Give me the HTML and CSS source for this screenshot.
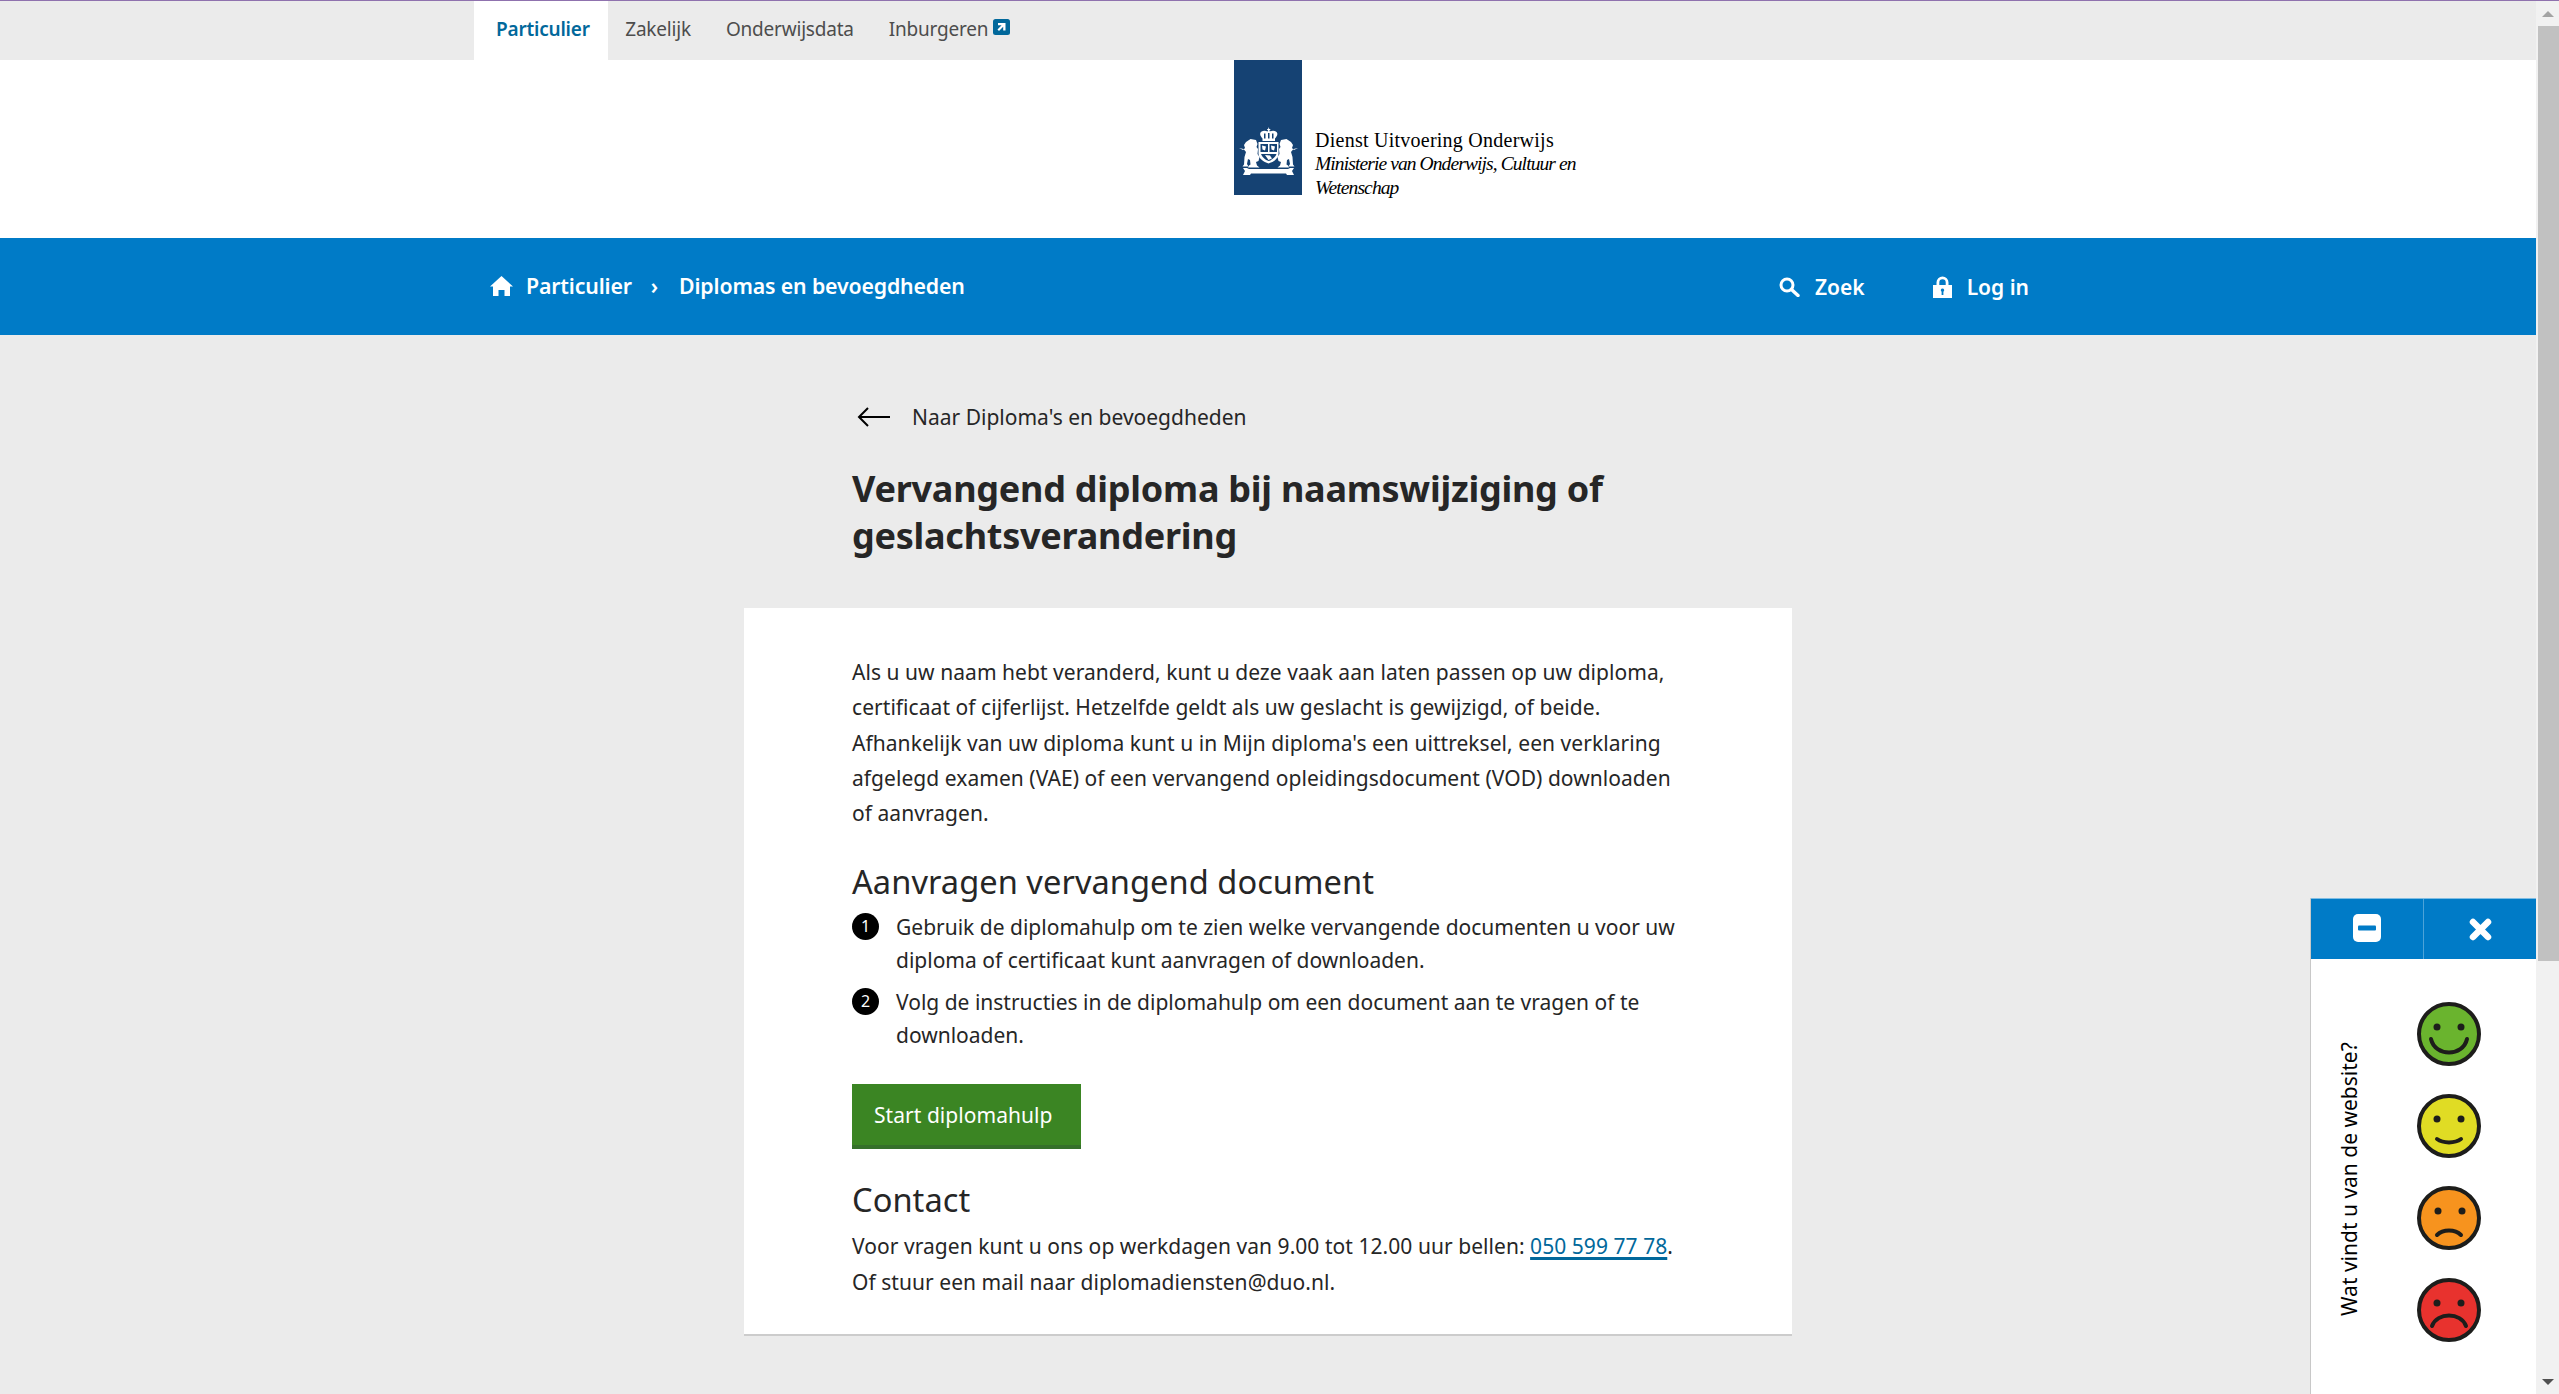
FILE: index.html
```html
<!DOCTYPE html>
<html lang="nl">
<head>
  <meta charset="UTF-8">
  <title>Vervangend diploma bij naamswijziging of geslachtsverandering</title>
  <link rel="stylesheet" href="styles.css">
</head>
<body>
  <div class="page">
    <nav class="topbar">
      <div class="wrap topbar-inner">
        <a class="tab active">Particulier</a>
        <a class="tab">Zakelijk</a>
        <a class="tab">Onderwijsdata</a>
        <a class="tab">Inburgeren
          <svg class="ext-icon" viewBox="0 0 17 16"><rect width="17" height="16" rx="2.5" fill="#01689b"/><path d="M5 4h7.500v7.500h-2.300V7.800L6 12 4.500 10.500 8.600 6.300H5z" fill="#fff"/></svg>
        </a>
      </div>
    </nav>

    <header class="masthead">
      <div class="wrap">
        <div class="logo">
          <div class="logo-band">
            <!-- wapen -->
            <svg class="crest" viewBox="0 0 59 49" fill="#fff">
              <path d="M29.500 0l.8 2h1v1l-1 .3.500 1.200c3.500-1.500 7-.5 7.500 2 .3 1.700-1 3.500-2.300 5v2.500H23.500V11.500c-1.300-1.500-2.600-3.300-2.300-5 .5-2.500 4-3.500 7.500-2l.5-1.200-1-.3V2h1z"/>
              <path d="M25 6.500v5h1.500v-5zM29 6v5.500h1.500V6zM33 6.500v5h1.500v-5z" fill="#154273"/>
              <path d="M19.500 15h20v11.500c0 5-5 8.500-10 10-5-1.500-10-5-10-10z"/>
              <path d="M21.500 17h7.500v8h-7.500zM30.500 17h7.500v8h-7.500zM22 27h15.500c-1 3-4.500 6-7.800 7-3.200-1-6.700-4-7.700-7z" fill="#154273"/>
              <path d="M23 18.500l4 1-1 4-2.500-1zM32 18.500l4 1-1 4-2.500-1zM26 28l5 .5 2 3-3.500 1.500z"/>
              <g id="leeuw">
                <path d="M0 21l4 2 2-2-1-3 2-3 4.500-3 5.500 1 1.500 4-1 3 1.500 2-.5 5 2 3-1 4-2.500 1 1 3.500 2.500 2H9l1-2 1.500-1-.5-4.500-2-1-1 5 1.500 2.500H3.500l1.500-2 .5-7.500 1.500-5-2.500-3z"/>
              </g>
              <use href="#leeuw" transform="matrix(-1 0 0 1 59 0)"/>
              <path d="M4 41h4l2 1h39l2-1h4l-2 3 2 4h-7l-1-1.500H12L11 48H4l2-4z"/>
            </svg>
          </div>
          <div class="logo-text">
            <span class="logo-line">Dienst Uitvoering Onderwijs</span>
            <em class="logo-line sub">Ministerie van Onderwijs, Cultuur en Wetenschap</em>
          </div>
        </div>
      </div>
    </header>

    <div class="bluebar">
      <div class="wrap bluebar-inner">
        <div class="crumbs">
          <svg class="home-icon" viewBox="0 0 23 20"><path d="M11.500 0L23 10.500h-3V20h-5.500v-6h-6v6H3v-9.500H0z" fill="#fff"/></svg>
          <a>Particulier</a>
          <span class="crumb-sep">›</span>
          <a>Diplomas en bevoegdheden</a>
        </div>
        <div class="tools">
          <a class="tool">
            <svg class="search-icon" viewBox="0 0 21 20"><circle cx="8" cy="8" r="6" fill="none" stroke="#fff" stroke-width="3"/><path d="M12.500 12.500l6.500 6" stroke="#fff" stroke-width="3.400" stroke-linecap="round"/></svg>
            Zoek
          </a>
          <a class="tool">
            <svg class="lock-icon" viewBox="0 0 19 22"><path d="M3.500 9V6.500a6 6 0 0 1 12 0V9h-2.800V6.500a3.200 3.200 0 0 0-6.400 0V9z" fill="#fff"/><path fill-rule="evenodd" d="M0 9h19v13H0zM9.500 12.500a1.800 1.800 0 0 0-.9 3.300V19h1.800v-3.200a1.800 1.800 0 0 0-.9-3.300z" fill="#fff"/></svg>
            Log in
          </a>
        </div>
      </div>
    </div>

    <main class="content">
      <a class="backlink">
        <svg class="back-arrow" viewBox="0 0 33 20"><path d="M33 10H2M11 1l-9 9 9 9" fill="none" stroke="#000" stroke-width="2"/></svg>
        Naar Diploma's en bevoegdheden
      </a>
      <h1>Vervangend diploma bij naamswijziging of geslachtsverandering</h1>

      <section class="card">
        <p class="intro">Als u uw naam hebt veranderd, kunt u deze vaak aan laten passen op uw diploma, certificaat of cijferlijst. Hetzelfde geldt als uw geslacht is gewijzigd, of beide. Afhankelijk van uw diploma kunt u in Mijn diploma's een uittreksel, een verklaring afgelegd examen (VAE) of een vervangend opleidingsdocument (VOD) downloaden of aanvragen.</p>

        <h2 class="sub-first">Aanvragen vervangend document</h2>
        <ol class="steps">
          <li class="step"><span class="step-nr">1</span><span>Gebruik de diplomahulp om te zien welke vervangende documenten u voor uw diploma of certificaat kunt aanvragen of downloaden.</span></li>
          <li class="step"><span class="step-nr">2</span><span>Volg de instructies in de diplomahulp om een document aan te vragen of te downloaden.</span></li>
        </ol>
        <a class="btn">Start diplomahulp</a>

        <h2 class="sub-contact">Contact</h2>
        <p class="contact-text">Voor vragen kunt u ons op werkdagen van 9.00 tot 12.00 uur bellen: <a class="phone">050 599 77 78</a>.<br>Of stuur een mail naar diplomadiensten@duo.nl.</p>
      </section>
    </main>

    <aside class="feedback">
      <div class="feedback-head">
        <button class="fb-btn">
          <svg class="fb-min" viewBox="0 0 28 28"><rect width="28" height="28" rx="5" fill="#fff"/><rect x="5" y="11.500" width="18" height="5" rx="1" fill="#007bc7"/></svg>
        </button>
        <button class="fb-btn">
          <svg class="fb-close" viewBox="0 0 23 23"><path d="M4 4l15 15M19 4L4 19" stroke="#fff" stroke-width="6.500" stroke-linecap="round"/></svg>
        </button>
      </div>
      <div class="feedback-body">
        <div class="fb-label">Wat vindt u van de website?</div>
        <div class="faces">
          <svg class="face" viewBox="0 0 64 64"><circle cx="32" cy="32" r="30" fill="#6ab42e" stroke="#1d1d1b" stroke-width="4"/><circle cx="20" cy="25" r="3.500" fill="#1d1d1b"/><circle cx="44" cy="25" r="3.500" fill="#1d1d1b"/><path d="M14 37c4 18 32 18 36 0" fill="none" stroke="#1d1d1b" stroke-width="4" stroke-linecap="round"/></svg>
          <svg class="face" viewBox="0 0 64 64"><circle cx="32" cy="32" r="30" fill="#e0dc24" stroke="#1d1d1b" stroke-width="4"/><circle cx="20" cy="25" r="3.500" fill="#1d1d1b"/><circle cx="44" cy="25" r="3.500" fill="#1d1d1b"/><path d="M20 45c6 4.500 18 4.500 24 0" fill="none" stroke="#1d1d1b" stroke-width="4" stroke-linecap="round"/></svg>
          <svg class="face" viewBox="0 0 64 64"><circle cx="32" cy="32" r="30" fill="#f7931e" stroke="#1d1d1b" stroke-width="4"/><circle cx="21" cy="25" r="3.500" fill="#1d1d1b"/><circle cx="45" cy="25" r="3.500" fill="#1d1d1b"/><path d="M20 49c6-6 18-6 24 0" fill="none" stroke="#1d1d1b" stroke-width="4" stroke-linecap="round"/></svg>
          <svg class="face" viewBox="0 0 64 64"><circle cx="32" cy="32" r="30" fill="#e8322e" stroke="#1d1d1b" stroke-width="4"/><circle cx="20" cy="25" r="3.500" fill="#1d1d1b"/><circle cx="44" cy="25" r="3.500" fill="#1d1d1b"/><path d="M15 48c5-14 29-14 34 0" fill="none" stroke="#1d1d1b" stroke-width="4" stroke-linecap="round"/></svg>
        </div>
      </div>
    </aside>
  </div>

  <div class="scrollbar">
    <div class="scroll-up"></div>
    <div class="scroll-thumb"></div>
    <div class="scroll-track"></div>
    <div class="scroll-down"></div>
  </div>
</body>
</html>
```

FILE: styles.css
```css
:root {
  --blue: #007bc7;
  --link: #01689b;
  --grey: #ebebeb;
  --text: #262626;
}

html, body {
  height: 100%;
}

body {
  margin: 0;
  display: flex;
  height: 100vh;
  overflow: hidden;
  box-sizing: border-box;
  border-top: 1px solid #8f72ae;
  background: var(--grey);
  color: var(--text);
  font-family: "Noto Sans", "Open Sans", sans-serif;
  font-size: 21px;
}

.page {
  flex: 1;
  min-width: 0;
  position: relative;
  overflow: hidden;
}

.wrap {
  width: 1600px;
  margin: 0 auto;
}

/* top tabs */
.topbar {
  height: 59px;
  background: var(--grey);
}

.topbar-inner {
  display: flex;
  padding-left: 6px;
  box-sizing: border-box;
}

.tab {
  height: 59px;
  display: flex;
  align-items: center;
  padding: 0 17.500px 4px;
  box-sizing: border-box;
  font-size: 19px;
  letter-spacing: -0.2px;
  color: #4d4d4d;
}

.tab.active {
  background: #fff;
  color: var(--link);
  font-weight: 600;
  padding: 0 18px 4px 22px;
}

.ext-icon {
  width: 17px;
  height: 16px;
  margin: -4px 0 0 5px;
}

/* logo */
.masthead {
  height: 178px;
  background: #fff;
}

.logo {
  display: flex;
  margin-left: 766px;
}

.logo-band {
  width: 68px;
  height: 135px;
  background: #154273;
  display: flex;
  justify-content: center;
  align-items: flex-end;
  padding-bottom: 19px;
  box-sizing: border-box;
}

.crest {
  width: 59px;
  height: 49px;
}

.logo-text {
  width: 270px;
  margin-left: 13px;
  padding-top: 68px;
  font-family: "Liberation Serif", serif;
  font-size: 20px;
  line-height: 24px;
  color: #000;
}

.logo-line {
  display: block;
  letter-spacing: 0.25px;
}

.logo-line.sub {
  font-size: 19.500px;
  letter-spacing: -0.9px;
}

/* blue bar */
.bluebar {
  height: 97px;
  background: var(--blue);
  color: #fff;
  font-weight: 600;
}

.bluebar-inner {
  height: 97px;
  display: flex;
  justify-content: space-between;
  align-items: center;
  padding: 0 39px 0 22px;
  box-sizing: border-box;
}

.crumbs {
  display: flex;
  align-items: center;
  padding-bottom: 2px;
  font-size: 21.300px;
  letter-spacing: -0.15px;
}

.home-icon {
  width: 23px;
  height: 20px;
  margin-right: 13px;
}

.crumb-sep {
  margin: 0 21px 0 19px;
}

.tools {
  display: flex;
  gap: 68px;
  font-size: 21px;
}

.tool {
  display: flex;
  align-items: center;
  gap: 15px;
}

.search-icon {
  width: 21px;
  height: 20px;
}

.lock-icon {
  width: 19px;
  height: 22px;
}

/* content */
.content {
  width: 1048px;
  margin: 0 auto;
  padding-top: 67px;
}

.backlink {
  display: flex;
  align-items: center;
  gap: 22px;
  margin-left: 113px;
  line-height: 30px;
  font-size: 21px;
}

.back-arrow {
  width: 33px;
  height: 20px;
}

h1 {
  margin: 33px 0 49px 108px;
  width: 800px;
  font-size: 36px;
  letter-spacing: -0.25px;
  line-height: 47px;
  font-weight: 700;
}

.card {
  background: #fff;
  padding: 47px 108px 32px;
  height: 726px;
  box-sizing: border-box;
  box-shadow: 0 2px 0 #ccc;
  letter-spacing: 0.05px;
}

.intro {
  margin: 0;
  line-height: 35.300px;
}

h2 {
  margin: 0;
  font-size: 32.600px;
  line-height: 44px;
  font-weight: 400;
}

.sub-first {
  margin-top: 29px;
}

.steps {
  list-style: none;
  margin: 7px 0 0;
  padding: 0;
  display: flex;
  flex-direction: column;
  gap: 10px;
  line-height: 32.500px;
  letter-spacing: 0;
}

.step {
  display: flex;
  gap: 17px;
}

.step-nr {
  flex: none;
  width: 27px;
  height: 27px;
  margin-top: 2px;
  border-radius: 50%;
  background: #000;
  color: #fff;
  font-size: 16px;
  line-height: 27px;
  text-align: center;
}

.btn {
  display: flex;
  align-items: center;
  width: 229px;
  height: 65px;
  margin-top: 33px;
  padding: 0 0 0 22px;
  box-sizing: border-box;
  background: #3b8523;
  border-bottom: 4px solid #35702a;
  color: #fff;
  font-size: 21px;
}

.sub-contact {
  margin-top: 29px;
}

.contact-text {
  margin: 7px 0 0;
  line-height: 35.300px;
}

.phone {
  color: var(--link);
  text-decoration: underline;
  text-decoration-thickness: 3px;
  text-underline-offset: 3px;
}

/* feedback widget */
.feedback {
  position: absolute;
  right: 0;
  top: 897px;
  bottom: 0;
  width: 226px;
  background: #fff;
  border-left: 1px solid #c8c8c8;
  box-sizing: border-box;
}

.feedback-head {
  display: flex;
  height: 61px;
  background: var(--blue);
  border-top: 1px solid #7fbde3;
  box-sizing: border-box;
}

.fb-btn {
  flex: 1;
  border: none;
  padding: 0;
  background: none;
  display: flex;
  align-items: center;
  justify-content: center;
}

.fb-btn + .fb-btn {
  border-left: 1px solid #4da3d8;
}

.fb-min {
  width: 28px;
  height: 28px;
  margin-top: -3px;
}

.fb-close {
  width: 23px;
  height: 23px;
}

.feedback-body {
  display: flex;
  padding: 43px 0 0 23px;
}

.fb-label {
  writing-mode: vertical-rl;
  transform: rotate(180deg);
  height: 276px;
  width: 30px;
  margin-top: 38px;
  font-size: 21px;
  line-height: 30px;
  color: #000;
  white-space: nowrap;
}

.faces {
  display: flex;
  flex-direction: column;
  gap: 28px;
  margin-left: 53px;
}

.face {
  width: 64px;
  height: 64px;
  display: block;
}

/* scrollbar, drawn */
.scrollbar {
  flex: none;
  width: 23px;
  display: flex;
  flex-direction: column;
  background: #f1f1f1;
}

.scroll-up, .scroll-down {
  height: 25px;
  display: flex;
  justify-content: center;
  align-items: center;
}

.scroll-up::before {
  content: "";
  border: 6px solid transparent;
  border-top: 0;
  border-bottom: 6px solid #a3a3a3;
}

.scroll-down::before {
  content: "";
  border: 6px solid transparent;
  border-bottom: 0;
  border-top: 6px solid #505050;
}

.scroll-thumb {
  height: 935px;
  margin-left: 2px;
  background: #c1c1c1;
}

.scroll-track {
  flex: 1;
}
```
